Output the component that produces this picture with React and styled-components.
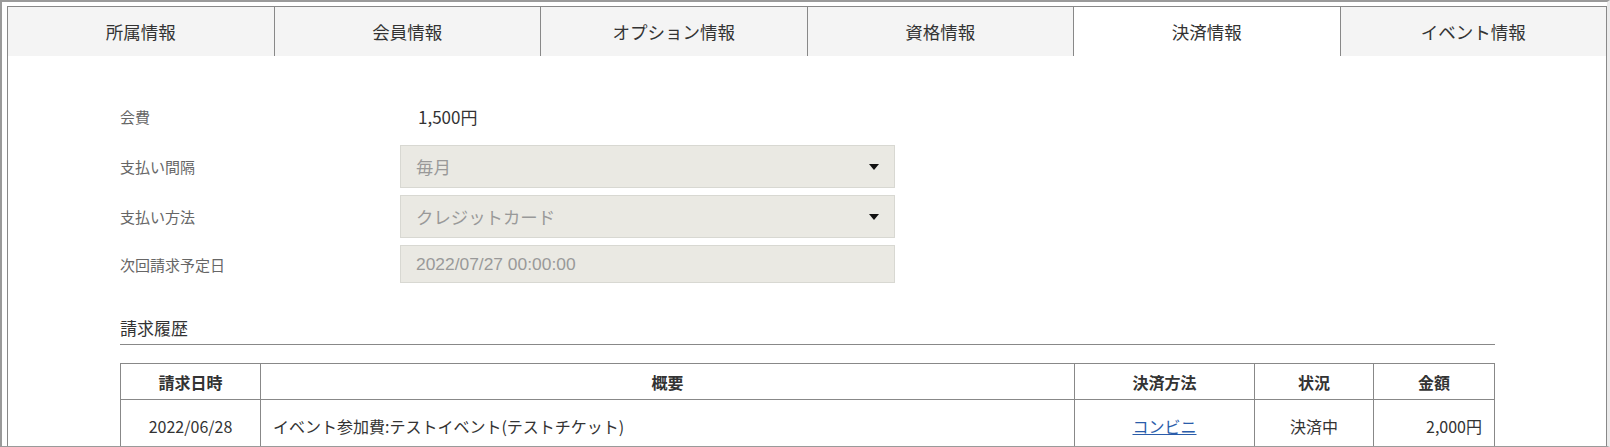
import React from "react";
import styled, { createGlobalStyle } from "styled-components";

const Global = createGlobalStyle`
  html, body { margin: 0; padding: 0; height: 447px; overflow: hidden; background: #fff; }
  body { font-family: "Noto Sans CJK JP", "Noto Sans", sans-serif; color: #333; }
  * { box-sizing: border-box; }
`;

const Frame = styled.div`
  height: 447px;
  border-top: 2px solid #9a9a9a;
  border-left: 2px solid #9a9a9a;
  border-bottom: 1px solid #9a9a9a;
  border-right: 3px solid #ebebeb;
  padding: 4px 0 0 5px;
  display: flex;
  flex-direction: column;
`;

const Panel = styled.div`
  flex: 1;
  border: 1px solid #888;
  border-bottom: none;
  overflow: hidden;
  display: flex;
  flex-direction: column;
`;

const TabBar = styled.div`
  display: flex;
  height: 49px;
  flex-shrink: 0;
`;

const Tab = styled.div`
  flex: 1;
  display: flex;
  align-items: center;
  justify-content: center;
  font-size: 17.5px;
  color: #333;
  background: ${(p) => (p.$active ? "#fff" : "#f4f4f4")};
  & + & { border-left: 1px solid #888; }
`;

const Content = styled.div`
  padding: 39px 111px 0 112px;
`;

const Form = styled.div`
  display: flex;
  flex-direction: column;
  gap: 7px;
`;

const Row = styled.div`
  display: flex;
  align-items: center;
  height: ${(p) => p.$h || 43}px;
`;

const Label = styled.div`
  width: 280px;
  font-size: 15px;
  color: #666;
`;

const Value = styled.div`
  padding-left: 18px;
  font-size: 17px;
  color: #333;
`;

const Field = styled.div`
  width: 495px;
  height: 100%;
  background: #eae9e3;
  border: 1px solid #d8d8d2;
  display: flex;
  align-items: center;
  justify-content: space-between;
  padding: 0 15px;
  font-family: "Liberation Sans", "Noto Sans CJK JP", sans-serif;
  font-size: 17.4px;
  color: #999;
`;

const Caret = styled.span`
  width: 0;
  height: 0;
  border-left: 5px solid transparent;
  border-right: 5px solid transparent;
  border-top: 6px solid #111;
`;

const Heading = styled.div`
  margin-top: 33px;
  font-size: 17px;
  line-height: 24px;
  color: #333;
  padding-bottom: 4px;
  border-bottom: 1px solid #888;
`;

const Table = styled.table`
  margin-top: 18px;
  width: 100%;
  border-collapse: collapse;
  table-layout: fixed;
  font-size: 16px;
  color: #333;
`;

const Th = styled.th`
  border: 1px solid #888;
  height: 36px;
  font-weight: bold;
  text-align: center;
  padding: 0 10px;
`;

const Td = styled.td`
  border: 1px solid #888;
  height: 52px;
  padding: 0 12px;
  text-align: ${(p) => p.$align || "center"};
`;

const Link = styled.a`
  color: #2a5caa;
  text-decoration: underline;
`;

export default function App() {
  const tabs = ["所属情報", "会員情報", "オプション情報", "資格情報", "決済情報", "イベント情報"];
  return (
    <>
      <Global />
      <Frame>
        <Panel>
          <TabBar>
            {tabs.map((t) => (
              <Tab key={t} $active={t === "決済情報"}>{t}</Tab>
            ))}
          </TabBar>
          <Content>
            <Form>
              <Row>
                <Label>会費</Label>
                <Value>1,500円</Value>
              </Row>
              <Row>
                <Label>支払い間隔</Label>
                <Field>毎月<Caret /></Field>
              </Row>
              <Row>
                <Label>支払い方法</Label>
                <Field>クレジットカード<Caret /></Field>
              </Row>
              <Row $h={38}>
                <Label>次回請求予定日</Label>
                <Field>2022/07/27 00:00:00</Field>
              </Row>
            </Form>
            <Heading>請求履歴</Heading>
            <Table>
              <colgroup>
                <col style={{ width: 140 }} />
                <col />
                <col style={{ width: 180 }} />
                <col style={{ width: 119 }} />
                <col style={{ width: 121 }} />
              </colgroup>
              <thead>
                <tr>
                  <Th>請求日時</Th>
                  <Th>概要</Th>
                  <Th>決済方法</Th>
                  <Th>状況</Th>
                  <Th>金額</Th>
                </tr>
              </thead>
              <tbody>
                <tr>
                  <Td>2022/06/28</Td>
                  <Td $align="left">イベント参加費:テストイベント(テストチケット)</Td>
                  <Td><Link href="#">コンビニ</Link></Td>
                  <Td>決済中</Td>
                  <Td $align="right">2,000円</Td>
                </tr>
              </tbody>
            </Table>
          </Content>
        </Panel>
      </Frame>
    </>
  );
}
